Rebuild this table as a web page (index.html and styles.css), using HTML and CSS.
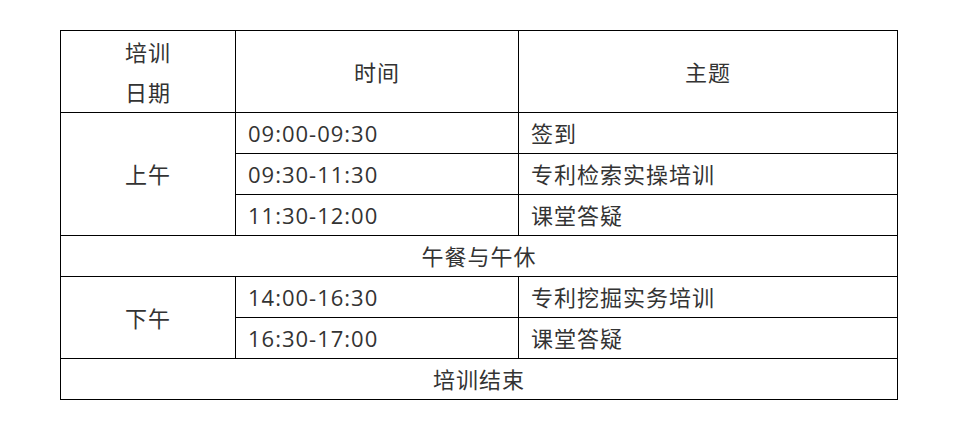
FILE: index.html
```html
<!DOCTYPE html>
<html lang="zh-CN">
<head>
<meta charset="utf-8">
<link rel="stylesheet" href="styles.css">
</head>
<body>
<table class="schedule">
  <colgroup>
    <col class="c1">
    <col class="c2">
    <col class="c3">
  </colgroup>
  <tr class="head">
    <td class="center">培训<br>日期</td>
    <td class="center">时间</td>
    <td class="center">主题</td>
  </tr>
  <tr>
    <td class="center" rowspan="3">上午</td>
    <td>09:00-09:30</td>
    <td>签到</td>
  </tr>
  <tr>
    <td>09:30-11:30</td>
    <td>专利检索实操培训</td>
  </tr>
  <tr>
    <td>11:30-12:00</td>
    <td>课堂答疑</td>
  </tr>
  <tr>
    <td class="center" colspan="3">午餐与午休</td>
  </tr>
  <tr>
    <td class="center" rowspan="2">下午</td>
    <td>14:00-16:30</td>
    <td>专利挖掘实务培训</td>
  </tr>
  <tr>
    <td>16:30-17:00</td>
    <td>课堂答疑</td>
  </tr>
  <tr>
    <td class="center" colspan="3">培训结束</td>
  </tr>
</table>
</body>
</html>
```

FILE: styles.css
```css
html, body {
  margin: 0;
  padding: 0;
  background: #ffffff;
}
body {
  padding-top: 30px;
  font-family: "Open Sans", "Noto Sans CJK SC", sans-serif;
  color: #333333;
}
.schedule {
  border-collapse: collapse;
  margin: 0 0 0 60px;
  width: 837px;
  table-layout: fixed;
  font-size: 22px;
  letter-spacing: 1px;
}
.c1 { width: 175px; }
.c2 { width: 283px; }
.c3 { width: 379px; }
.schedule td {
  border: 1px solid #000000;
  padding: 0 12px;
  height: 40px;
  line-height: 40px;
  vertical-align: middle;
}
.schedule .head td {
  height: 81px;
  line-height: 40px;
}
.schedule td.center {
  text-align: center;
}
```
